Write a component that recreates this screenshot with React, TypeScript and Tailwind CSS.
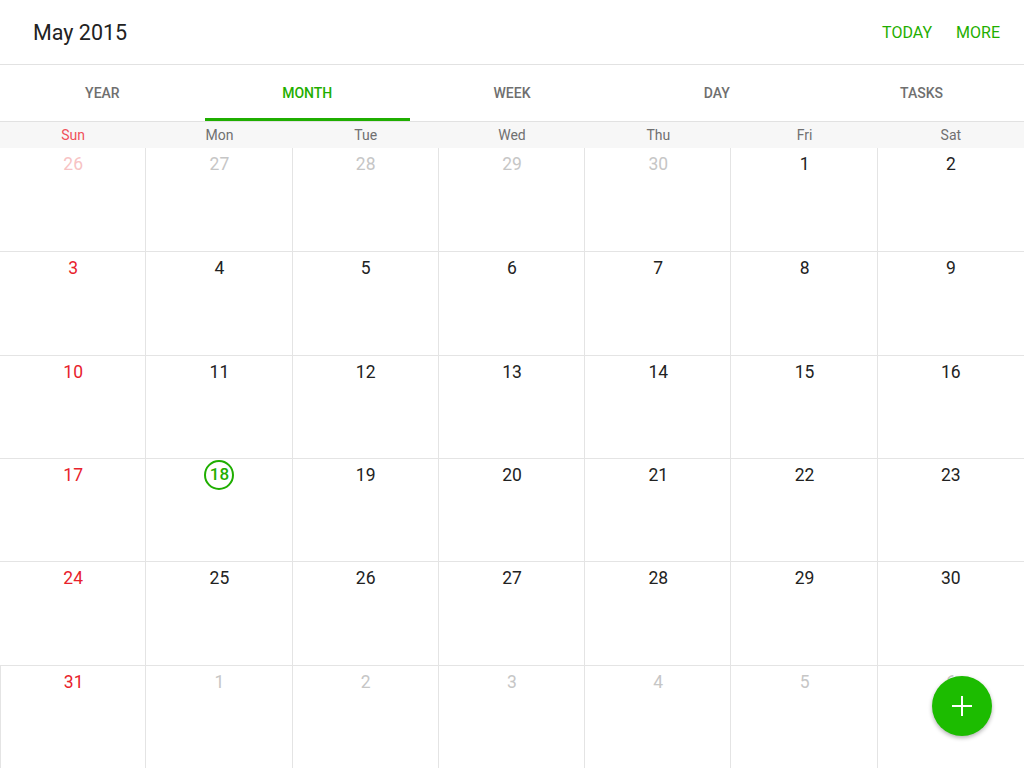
import React from "react";

type Cell = { n: number; muted?: boolean; today?: boolean };

const weeks: Cell[][] = [
  [26, 27, 28, 29, 30].map((n) => ({ n, muted: true })).concat([1, 2].map((n) => ({ n }))),
  [3, 4, 5, 6, 7, 8, 9].map((n) => ({ n })),
  [10, 11, 12, 13, 14, 15, 16].map((n) => ({ n })),
  [17, 18, 19, 20, 21, 22, 23].map((n) => ({ n, today: n === 18 })),
  [24, 25, 26, 27, 28, 29, 30].map((n) => ({ n })),
  [{ n: 31 }].concat([1, 2, 3, 4, 5, 6].map((n) => ({ n, muted: true }))),
];

const days = ["Sun", "Mon", "Tue", "Wed", "Thu", "Fri", "Sat"];
const tabs = ["YEAR", "MONTH", "WEEK", "DAY", "TASKS"];

export default function App() {
  return (
    <div
      className="w-[1024px] h-[768px] bg-white overflow-hidden relative flex flex-col"
      style={{ fontFamily: "Roboto, 'Noto Sans', sans-serif" }}
    >
      <div className="h-[65px] shrink-0 border-b border-[#e2e2e2] flex items-center pl-[33px] pr-[24px]">
        <div className="text-[21.5px] text-[#222] flex-1 pt-[2px]">May 2015</div>
        <div className="flex gap-[24px] text-[16px] text-[#1fae00] pt-[2px]">
          <span>TODAY</span>
          <span>MORE</span>
        </div>
      </div>
      <div className="h-[57px] shrink-0 border-b border-[#e2e2e2] flex">
        {tabs.map((t) => (
          <div key={t} className="flex-1 relative flex items-center justify-center">
            <span
              className={
                "text-[14px] font-medium " + (t === "MONTH" ? "text-[#1fae00]" : "text-[#6f6f6f]")
              }
            >
              {t}
            </span>
            {t === "MONTH" && <div className="absolute left-0 right-0 bottom-0 h-[3px] bg-[#1fae00]" />}
          </div>
        ))}
      </div>
      <div className="h-[26px] shrink-0 bg-[#f7f7f7] grid grid-cols-7">
        {days.map((d) => (
          <div
            key={d}
            className={
              "flex items-center justify-center text-[14px] " +
              (d === "Sun" ? "text-[#f0505a]" : "text-[#707070]")
            }
          >
            {d}
          </div>
        ))}
      </div>
      <div className="flex-1 grid grid-rows-6">
        {weeks.map((w, wi) => (
          <div
            key={wi}
            className={"grid grid-cols-7 " + (wi > 0 ? "border-t border-[#e4e4e4]" : "")}
          >
            {w.map((c, ci) => {
              let color = "text-[#222]";
              if (ci === 0) color = c.muted ? "text-[#f7c3c4]" : "text-[#e8222c]";
              else if (c.muted) color = "text-[#c6c6c6]";
              return (
                <div
                  key={ci}
                  className={
                    "flex justify-center pt-[5px] " +
                    (ci > 0 ? "border-l border-[#e4e4e4] -ml-px " : "") +
                    (wi === 5 && ci === 0 ? "border-l border-[#e4e4e4] " : "")
                  }
                >
                  {c.today ? (
                    <div className="w-[30px] h-[30px] rounded-full border-2 border-[#1fae00] flex items-center justify-center text-[17px] font-medium text-[#1fae00] mt-[-4px]">
                      18
                    </div>
                  ) : (
                    <span className={"text-[17.5px] leading-[22px] " + color}>{c.n}</span>
                  )}
                </div>
              );
            })}
          </div>
        ))}
      </div>
      <div className="absolute left-[932px] top-[676px] w-[60px] h-[60px] rounded-full bg-[#1cbc00] flex items-center justify-center shadow-[0_2px_4px_rgba(0,0,0,0.3)]">
        <svg width="22" height="22" viewBox="0 0 22 22">
          <path d="M11 1v20M1 11h20" stroke="white" strokeWidth="2" />
        </svg>
      </div>
    </div>
  );
}
